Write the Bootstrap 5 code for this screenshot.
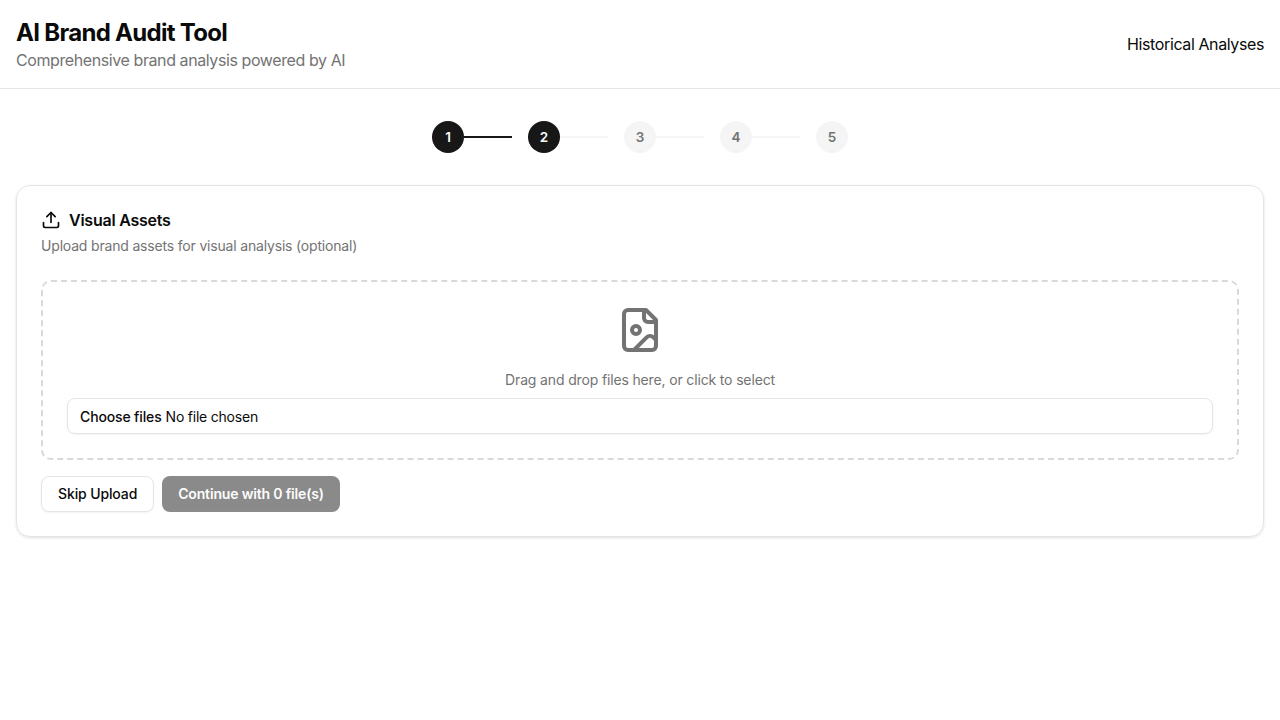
<!DOCTYPE html>
<html lang="en">
<head>
<meta charset="utf-8">
<meta name="viewport" content="width=device-width, initial-scale=1">
<title>AI Brand Audit Tool</title>
<link href="https://cdn.jsdelivr.net/npm/bootstrap@5.3.0/dist/css/bootstrap.min.css" rel="stylesheet">
<style>
  body { font-family: Inter, "Liberation Sans", sans-serif; color: #0a0a0a; background: #fff; }
  .topbar { height: 89px; border-bottom: 1px solid #e5e5e5; }
  .topbar h1 { font-size: 24px; line-height: 32px; font-weight: 700; letter-spacing: -.7px; padding-top: 1px; margin-bottom: -1px; }
  .topbar p { letter-spacing: -.41px; }
  .topbar a { letter-spacing: -.39px; }
  .muted { color: #737373; }
  .step { width: 32px; height: 32px; font-size: 14px; line-height: 20px; font-weight: 600; background: #f5f5f5; color: #737373; }
  .step span { font-size: 13.5px; }
  .step.done { background: #171717; color: #fafafa; }
  .bar { width: 48px; height: 2px; background: #f5f5f5; margin-right: 16px; }
  .bar.done { background: #171717; }
  .panel { border: 1px solid #e5e5e5; border-radius: 14px; padding: 24px; box-shadow: 0 1px 3px rgba(0,0,0,.1), 0 1px 2px -1px rgba(0,0,0,.1); }
  .panel h2 { font-size: 16px; line-height: 20px; font-weight: 600; letter-spacing: -.24px; }
  .fs14 { font-size: 14px; line-height: 20px; letter-spacing: -.18px; }
  .sub { padding-top: 6px; }
  .hint { letter-spacing: -.15px; }
  .dropzone { border: 2px dashed #d9d9d9; border-radius: 10px; padding: 24px; height: 180px; }
  .picker { height: 36px; border: 1px solid #e5e5e5; border-radius: 8px; padding: 2px 12px 0; box-shadow: 0 1px 2px rgba(0,0,0,.05); }
  .picker .choose { font-weight: 500; letter-spacing: -.14px; }
  .picker .no-file { letter-spacing: -.22px; }
  .act { height: 36px; border-radius: 8px; padding: 0 16px; font-size: 14px; line-height: 20px; font-weight: 500; letter-spacing: -.12px; }
  .act-outline, .act-outline:hover { background: #fff; border: 1px solid #e5e5e5; color: #0a0a0a; box-shadow: 0 1px 2px rgba(0,0,0,.05); }
  .act-primary, .act-primary:disabled { background: #171717; border: 0; color: #fafafa; opacity: .5; font-weight: 600; letter-spacing: -.17px; }
</style>
</head>
<body class="min-vh-100">
<header class="topbar d-flex align-items-center justify-content-between px-3">
  <div>
    <h1>AI Brand Audit Tool</h1>
    <p class="muted mb-0">Comprehensive brand analysis powered by AI</p>
  </div>
  <a href="#" class="text-reset text-decoration-none">Historical Analyses</a>
</header>
<main class="px-3 py-4">
  <div class="d-flex align-items-center justify-content-center mt-2 mb-4 pb-2">
    <div class="step done rounded-circle d-flex align-items-center justify-content-center"><span>1</span></div><div class="bar done"></div>
    <div class="step done rounded-circle d-flex align-items-center justify-content-center"><span>2</span></div><div class="bar"></div>
    <div class="step rounded-circle d-flex align-items-center justify-content-center"><span>3</span></div><div class="bar"></div>
    <div class="step rounded-circle d-flex align-items-center justify-content-center"><span>4</span></div><div class="bar"></div>
    <div class="step rounded-circle d-flex align-items-center justify-content-center"><span>5</span></div>
  </div>
  <section class="panel">
    <div class="d-flex align-items-center gap-2">
      <svg width="20" height="20" viewBox="0 0 24 24" fill="none" stroke="currentColor" stroke-width="2" stroke-linecap="round" stroke-linejoin="round"><path d="M12 3v12"/><path d="m17 8-5-5-5 5"/><path d="M21 15v4a2 2 0 0 1-2 2H5a2 2 0 0 1-2-2v-4"/></svg>
      <h2 class="mb-0">Visual Assets</h2>
    </div>
    <p class="muted fs14 mb-4 sub">Upload brand assets for visual analysis (optional)</p>
    <div class="dropzone text-center mb-3">
      <svg class="muted d-block mx-auto mb-3" width="48" height="48" viewBox="0 0 24 24" fill="none" stroke="currentColor" stroke-width="2" stroke-linecap="round" stroke-linejoin="round"><path d="M15 2H6a2 2 0 0 0-2 2v16a2 2 0 0 0 2 2h12a2 2 0 0 0 2-2V7Z"/><path d="M14 2v4a2 2 0 0 0 2 2h4"/><circle cx="10" cy="12" r="2"/><path d="m20 17-1.296-1.296a2.41 2.41 0 0 0-3.408 0L9 22"/></svg>
      <p class="muted fs14 hint mb-2">Drag and drop files here, or click to select</p>
      <div class="picker fs14 d-flex align-items-center gap-1"><span class="choose">Choose files</span><span class="no-file">No file chosen</span></div>
    </div>
    <div class="d-flex gap-2">
      <button class="btn act act-outline">Skip Upload</button>
      <button class="btn act act-primary" disabled>Continue with 0 file(s)</button>
    </div>
  </section>
</main>
<script src="https://cdn.jsdelivr.net/npm/bootstrap@5.3.0/dist/js/bootstrap.bundle.min.js"></script>
</body>
</html>
